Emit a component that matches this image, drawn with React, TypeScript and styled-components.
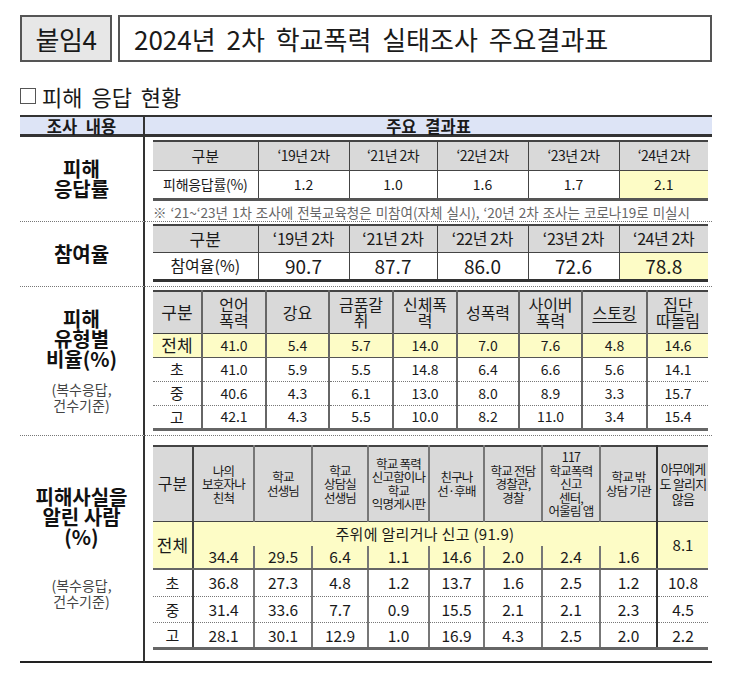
import React from 'react';
import styled, { createGlobalStyle } from 'styled-components';

const Global = createGlobalStyle`
  html, body { margin: 0; padding: 0; background: #fff; }
  body { font-family: "Noto Sans CJK KR", "Noto Sans", sans-serif; color: #1a1a1a; }
`;

const Page = styled.div`
  width: 730px;
  height: 677px;
  box-sizing: border-box;
  padding: 15px 18px 0 20px;
`;

const TopBar = styled.div`
  display: flex;
  gap: 6px;
  height: 47px;
`;

const Badge = styled.div`
  width: 92px;
  box-sizing: border-box;
  border: 2px solid #555;
  background: #e7e7e7;
  display: flex;
  align-items: center;
  justify-content: center;
  font-size: 26px;
  letter-spacing: -0.5px;
`;

const TitleBox = styled.div`
  flex: 1;
  box-sizing: border-box;
  border: 2px solid #555;
  display: flex;
  align-items: center;
  padding-left: 14px;
  font-size: 26px;
  word-spacing: 5px;
`;

const Heading = styled.div`
  margin-top: 22px;
  height: 24px;
  display: flex;
  align-items: center;
  gap: 6px;
  font-size: 22px;
  line-height: 24px;
  word-spacing: 4px;
`;

const Square = styled.span`
  width: 14px;
  height: 14px;
  border: 1px solid #555;
  display: inline-block;
`;

const Sheet = styled.div`
  margin-top: 7px;
  display: grid;
  grid-template-columns: 125px 567px;
`;

const HeadCell = styled.div<{ $split?: boolean }>`
  height: 17px;
  background: #dde4f6;
  border-top: 2px solid #333;
  border-bottom: 3px solid #333;
  border-right: ${p => (p.$split ? '2px solid #333' : 'none')};
  font-size: 16.5px;
  font-weight: 700;
  line-height: 18px;
  text-align: center;
  word-spacing: 5px;
`;

const Label = styled.div<{ $last?: boolean; $gap?: number }>`
  border-right: 2px solid #333;
  border-bottom: ${p => (p.$last ? '2px solid #222' : '1px dotted #777')};
  display: flex;
  flex-direction: column;
  align-items: center;
  justify-content: center;
  gap: ${p => p.$gap ?? 0}px;
`;

const LabelMain = styled.div`
  font-size: 20px;
  font-weight: 700;
  line-height: 20px;
  text-align: center;
  white-space: pre-line;
  color: #111;
`;

const LabelNote = styled.div`
  font-size: 14px;
  line-height: 16px;
  text-align: center;
  white-space: pre-line;
  color: #444;
`;

const Content = styled.div<{ $last?: boolean; $pt: number; $pb: number }>`
  border-bottom: ${p => (p.$last ? '2px solid #222' : '1px dotted #777')};
  padding: ${p => p.$pt}px 4px ${p => p.$pb}px 8px;
`;

const Note = styled.div`
  margin-top: 3px;
  font-size: 13.5px;
  line-height: 17px;
  color: #666;
  letter-spacing: 0px;
  word-spacing: 1px;
  white-space: nowrap;
`;

const Grid = styled.table<{ $bottom: string }>`
  width: 555px;
  border-collapse: collapse;
  table-layout: fixed;
  border-top: 2px solid #444;
  border-bottom: ${p => p.$bottom};
`;

const Row = styled.tr<{ $h: number }>`
  height: ${p => p.$h}px;
`;

type CellProps = {
  $bg?: string;
  $fs?: number;
  $lh?: number;
  $edge?: boolean;
  $line?: string;
  $under?: string;
  $ls?: number;
  $ul?: boolean;
};

const Cell = styled.td<CellProps>`
  padding: 0;
  text-align: center;
  vertical-align: middle;
  background: ${p => p.$bg ?? '#fff'};
  font-size: ${p => p.$fs ?? 14}px;
  line-height: ${p => (p.$lh ? `${p.$lh}px` : '1.2')};
  letter-spacing: ${p => p.$ls ?? 0}px;
  border-left: ${p => (p.$edge ? 'none' : p.$line ?? '1px solid #444')};
  border-bottom: ${p => p.$under ?? '1px solid #444'};
  white-space: pre-line;
  text-decoration: ${p => (p.$ul ? 'underline' : 'none')};
  text-underline-offset: 3px;
  color: #1a1a1a;
`;

const GRAY = '#d9d9d9';
const YELLOW = '#fdfcc6';

const years = ['‘19년 2차', '‘21년 2차', '‘22년 2차', '‘23년 2차', '‘24년 2차'];

function RateTable() {
  const vals = ['1.2', '1.0', '1.6', '1.7', '2.1'];
  const line = '1px solid #444';
  return (
    <Grid $bottom="3px solid #555">
      <colgroup>
        {[105, 91, 88, 91, 91, 89].map((w, i) => (
          <col key={i} style={{ width: w }} />
        ))}
      </colgroup>
      <tbody>
        <Row $h={29}>
          <Cell $bg={GRAY} $edge $fs={15}>구분</Cell>
          {years.map(y => (
            <Cell key={y} $bg={GRAY} $line={line} $ls={-0.6}>{y}</Cell>
          ))}
        </Row>
        <Row $h={29}>
          <Cell $edge $fs={14} $ls={-0.3} $under="none">피해응답률(%)</Cell>
          {vals.map((v, i) => (
            <Cell key={i} $line={line} $under="none" $bg={i === 4 ? YELLOW : '#fff'}>{v}</Cell>
          ))}
        </Row>
      </tbody>
    </Grid>
  );
}

function JoinTable() {
  const vals = ['90.7', '87.7', '86.0', '72.6', '78.8'];
  const line = '1px solid #444';
  return (
    <Grid $bottom="3px solid #333">
      <colgroup>
        {[105, 91, 88, 91, 91, 89].map((w, i) => (
          <col key={i} style={{ width: w }} />
        ))}
      </colgroup>
      <tbody>
        <Row $h={28}>
          <Cell $bg={GRAY} $edge $fs={17}>구분</Cell>
          {years.map(y => (
            <Cell key={y} $bg={GRAY} $line={line} $fs={16} $ls={-0.4}>
              {y.replace(' ', '  ')}
            </Cell>
          ))}
        </Row>
        <Row $h={28}>
          <Cell $edge $fs={16} $under="none">참여율(%)</Cell>
          {vals.map((v, i) => (
            <Cell key={i} $line={line} $under="none" $fs={19} $bg={i === 4 ? YELLOW : '#fff'}>{v}</Cell>
          ))}
        </Row>
      </tbody>
    </Grid>
  );
}

function TypeTable() {
  const heads = ['언어\n폭력', '강요', '금품갈\n취', '신체폭\n력', '성폭력', '사이버\n폭력', '스토킹', '집단\n따돌림'];
  const rows: [string, string[]][] = [
    ['전체', ['41.0', '5.4', '5.7', '14.0', '7.0', '7.6', '4.8', '14.6']],
    ['초', ['41.0', '5.9', '5.5', '14.8', '6.4', '6.6', '5.6', '14.1']],
    ['중', ['40.6', '4.3', '6.1', '13.0', '8.0', '8.9', '3.3', '15.7']],
    ['고', ['42.1', '4.3', '5.5', '10.0', '8.2', '11.0', '3.4', '15.4']],
  ];
  const line = '2px solid #666';
  return (
    <Grid $bottom="3px solid #666">
      <colgroup>
        {[49, 64, 63, 64, 64, 62, 63, 65, 61].map((w, i) => (
          <col key={i} style={{ width: w }} />
        ))}
      </colgroup>
      <tbody>
        <Row $h={42}>
          <Cell $bg={GRAY} $edge $fs={17}>구분</Cell>
          {heads.map(h => (
            <Cell key={h} $bg={GRAY} $line={line} $fs={16} $lh={16} $ul={h === '스토킹'}>{h}</Cell>
          ))}
        </Row>
        {rows.map(([k, vals], r) => {
          const total = r === 0;
          const under = total ? '1px solid #555' : r === 3 ? 'none' : '1px dotted #777';
          return (
            <Row key={k} $h={24}>
              <Cell $edge $bg={total ? YELLOW : '#fff'} $fs={total ? 17 : 15} $under={under}>{k}</Cell>
              {vals.map((v, i) => (
                <Cell key={i} $line={line} $bg={total ? YELLOW : '#fff'} $fs={14} $under={under}>{v}</Cell>
              ))}
            </Row>
          );
        })}
      </tbody>
    </Grid>
  );
}

function TellTable() {
  const heads = [
    '나의\n보호자나\n친척',
    '학교\n선생님',
    '학교\n상담실\n선생님',
    '학교 폭력\n신고함이나\n학교\n익명게시판',
    '친구나\n선·후배',
    '학교 전담\n경찰관,\n경찰',
    '117\n학교폭력\n신고\n센터,\n어울림 앱',
    '학교 밖\n상담 기관',
    '아무에게\n도 알리지\n않음',
  ];
  const total = ['34.4', '29.5', '6.4', '1.1', '14.6', '2.0', '2.4', '1.6'];
  const rows: [string, string[]][] = [
    ['초', ['36.8', '27.3', '4.8', '1.2', '13.7', '1.6', '2.5', '1.2', '10.8']],
    ['중', ['31.4', '33.6', '7.7', '0.9', '15.5', '2.1', '2.1', '2.3', '4.5']],
    ['고', ['28.1', '30.1', '12.9', '1.0', '16.9', '4.3', '2.5', '2.0', '2.2']],
  ];
  const line = '2px solid #777';
  const firstLine = '2px solid #444';
  const lastLine = '2px solid #333';
  const lineFor = (i: number) => (i === 0 ? firstLine : i === 8 ? lastLine : line);
  return (
    <Grid $bottom="3px solid #666">
      <colgroup>
        {[40, 61, 58, 56, 61, 55, 58, 58, 57, 51].map((w, i) => (
          <col key={i} style={{ width: w }} />
        ))}
      </colgroup>
      <tbody>
        <Row $h={76}>
          <Cell $bg={GRAY} $edge $fs={16}>구분</Cell>
          {heads.map((h, i) => (
            <Cell key={i} $bg={GRAY} $line={lineFor(i)} $fs={i === 8 ? 13 : 12.5} $lh={i === 8 ? 15 : 13.5} $ls={-0.8}>{h}</Cell>
          ))}
        </Row>
        <Row $h={24}>
          <Cell rowSpan={2} $edge $bg={YELLOW} $fs={17} $under="2px solid #666">전체</Cell>
          <Cell colSpan={8} $line={firstLine} $bg={YELLOW} $fs={15} $under="none" $ls={0.3}>
            주위에 알리거나 신고 (91.9)
          </Cell>
          <Cell rowSpan={2} $line={lastLine} $bg={YELLOW} $fs={15} $under="2px solid #666">8.1</Cell>
        </Row>
        <Row $h={23}>
          {total.map((v, i) => (
            <Cell key={i} $line={lineFor(i)} $bg={YELLOW} $fs={15.5} $under="2px solid #666">{v}</Cell>
          ))}
        </Row>
        {rows.map(([k, vals], r) => {
          const under = r === 2 ? 'none' : '1px dotted #777';
          return (
            <Row key={k} $h={r === 0 ? 28 : 26}>
              <Cell $edge $fs={15} $under={under}>{k}</Cell>
              {vals.map((v, i) => (
                <Cell key={i} $line={lineFor(i)} $fs={15.5} $under={under}>{v}</Cell>
              ))}
            </Row>
          );
        })}
      </tbody>
    </Grid>
  );
}

export default function App() {
  return (
    <>
      <Global />
      <Page>
        <TopBar>
          <Badge>붙임4</Badge>
          <TitleBox>2024년 2차 학교폭력 실태조사 주요결과표</TitleBox>
        </TopBar>
        <Heading>
          <Square />
          <span>피해 응답 현황</span>
        </Heading>
        <Sheet>
          <HeadCell $split>조사 내용</HeadCell>
          <HeadCell>주요 결과표</HeadCell>

          <Label>
            <LabelMain>{'피해\n응답률'}</LabelMain>
          </Label>
          <Content $pt={3} $pb={0}>
            <RateTable />
            <Note>※ ‘21~‘23년 1차 조사에 전북교육청은 미참여(자체 실시), ‘20년 2차 조사는 코로나19로 미실시</Note>
          </Content>

          <Label>
            <LabelMain>참여율</LabelMain>
          </Label>
          <Content $pt={2} $pb={4}>
            <JoinTable />
          </Content>

          <Label $gap={12}>
            <LabelMain>{'피해\n유형별\n비율(%)'}</LabelMain>
            <LabelNote>{'(복수응답,\n건수기준)'}</LabelNote>
          </Label>
          <Content $pt={3} $pb={4}>
            <TypeTable />
          </Content>

          <Label $last $gap={30}>
            <LabelMain>{'피해사실을\n알린 사람\n(%)'}</LabelMain>
            <LabelNote>{'(복수응답,\n건수기준)'}</LabelNote>
          </Label>
          <Content $last $pt={9} $pb={11}>
            <TellTable />
          </Content>
        </Sheet>
      </Page>
    </>
  );
}
